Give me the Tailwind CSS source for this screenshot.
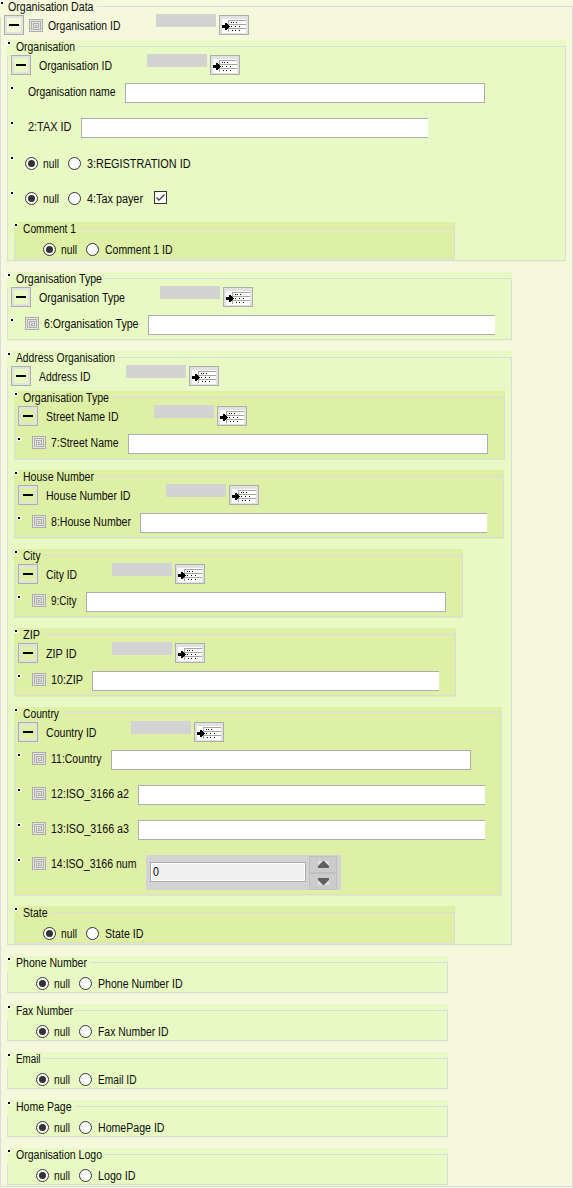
<!DOCTYPE html>
<html lang="en">
<head>
<meta charset="utf-8">
<title>Organisation Data</title>
<script src="https://cdn.jsdelivr.net/npm/@tailwindcss/browser@4"></script>
</head>
<body class="bg-[#f6f8db] font-['Liberation_Sans',Arial,sans-serif] text-[12px] leading-[14px] text-[#111] overflow-hidden">
<svg class="hidden">
  <symbol id="spiral" viewBox="0 0 14 13"><g fill="none" stroke="#adadad" shape-rendering="crispEdges"><rect x=".5" y=".5" width="13" height="12" fill="#e4e4dc"/><path d="M2.5 11V2.5H11.5V10.5H4.5V4.5H9.5V8.5H6.5V6.5H8"/></g></symbol>
  <symbol id="list" viewBox="0 0 24 14"><g shape-rendering="crispEdges"><path fill="#fff" d="M0 0h24v14H0z"/><path fill="#a8a498" d="M6 1h18v1H6zM6 5h18v1H6zM6 9h18v1H6zM6 1h1v12H6z"/><path fill="#000" d="M9 3h1v1H9zM11 3h1v1h-1zM14 3h1v1h-1zM9 7h1v1H9zM13 7h1v1h-1zM17 7h1v1h-1zM10 11h1v1h-1zM13 11h1v1h-1zM17 11h1v1h-1zM0 6h4v3H0zM3 4h2v7H3zM5 5h1v5H5zM6 6h1v3H6zM7 7h1v1H7z"/></g></symbol>
</svg>
<main id="form"></main>
<script>
const text = (t, w, cls = '') => `<svg class="block shrink-0 h-[14px] overflow-visible ${cls}" style="width:${w}px"><text x="0" y="11" textLength="${w}" lengthAdjust="spacingAndGlyphs" class="fill-[#0c0c0c]">${t}</text></svg>`;
const space = w => `<span class="shrink-0" style="width:${w}px"></span>`;
const bullet = '<i class="block shrink-0 size-1 bg-black border border-white"></i>';
const spiral = '<svg class="block shrink-0 w-[14px] h-[13px] mt-[5px]"><use href="#spiral"/></svg>';
const radio = on => `<span class="grid place-items-center shrink-0 size-[13px] rounded-full border border-[#333] bg-white">${on ? '<span class="size-[7px] rounded-full bg-[#333]"></span>' : ''}</span>`;

// header: [label, label start, label width, grey box start]; starts are relative to the group
const header = ([label, x, w, gx], icon) => `
  <div class="flex h-[26px] -mt-[3px] items-start">
    ${space(3)}<button class="shrink-0 size-5 mt-px border border-[#adadad]"><span class="grid place-items-center size-[18px] border-2 border-[#e1e1e1]"><span class="w-[10px] h-[2px] bg-black"></span></span></button>
    ${icon ? space(5) + spiral + space(x - 43) : space(x - 24)}${text(label, w, 'mt-[5px]')}${space(gx - x - w)}
    <span class="shrink-0 w-[60px] h-[13px] bg-[#d3d3d3]"></span>
    <button class="shrink-0 ml-[3px] mt-px w-[30px] h-5 pl-[2px] pt-[2px] border border-[#adadad] bg-[#e1e1e1]"><svg class="block w-6 h-[14px]"><use href="#list"/></svg></button>
  </div>`;

const input = (w, open) => `<input class="block shrink-0 mt-[3px] h-5 bg-white border-y border-l border-[#abadb3] ${open ? '' : 'border-r'}" style="width:${w}px">`;
// field: label start, label, label width, input start, input width
const field = (x, label, w, ix, iw, icon, open) => `
  <div class="flex h-[35px] items-start">${space(2)}<span class="pt-[6px]">${bullet}</span>
    ${icon ? space(11) + spiral + space(x - 32) : space(x - 7)}${text(label, w, 'mt-[5px]')}${space(ix - x - w)}${input(iw, open)}</div>`;
const choice = (label, w, check) => `
  <div class="flex h-[35px] items-start">${space(2)}<span class="pt-[6px]">${bullet}</span>${space(11)}
    <div class="flex items-center h-[13px] mt-[7px]">${radio(1)}${space(5)}${text('null', 16)}${space(9)}${radio(0)}${space(6)}${text(label, w)}</div>
    ${check ? space(11) + '<svg class="block w-[13px] h-[13px] mt-[6px]" viewBox="0 0 13 13"><rect x=".5" y=".5" width="12" height="12" fill="#fff" stroke="#333"/><path d="M2.5 6.5 5 9.2 10.5 3.5" fill="none" stroke="#333" stroke-width="1.2"/></svg>' : ''}</div>`;
const spinner = `
  <div class="flex h-[35px] items-start">${space(2)}<span class="pt-[6px]">${bullet}</span>${space(11)}${spiral}${space(5)}${text('14:ISO_3166 num', 85.5, 'mt-[5px]')}${space(9.5)}
    <div class="flex mt-[3px] w-[195px] h-[35px] bg-[#d3d3d3]">
      <div class="mt-[7px] ml-1 w-[156px] h-5 border border-[#a6a8b0] bg-white p-px"><div class="h-full bg-[#f0f0f0] pl-px pt-px">${text('0', 6)}</div></div>
      <div class="ml-[3px] mt-px w-7 h-[34px]">
        <div class="grid place-items-center h-[17px] border border-[#bfbfbf] bg-[#ccc]"><svg class="w-[11px] h-[7px]"><path fill="#e2e2e2" d="M0 0h11v7H0z"/><path fill="#606060" d="M5 0h1l5 5v2H0V5z"/></svg></div>
        <div class="grid place-items-center h-[17px] border border-[#bfbfbf] bg-[#ccc]"><svg class="w-[11px] h-[7px]"><path fill="#e2e2e2" d="M0 0h11v7H0z"/><path fill="#606060" d="M0 0h11v2L6 7H5L0 2z"/></svg></div>
      </div>
    </div></div>`;

const tones = ['bg-[#f6f8db]', 'bg-[#e8f9c3]', 'bg-[#def0a5]'];
// group: tone, width, height, legend, legend start, legend width
const group = (tone, w, h, legend, lx, lw, body, gap = 10) => `
  <section class="flex flex-col ${tones[tone]}" style="width:${w}px;height:${h}px;margin-bottom:${gap}px">
    <div class="flex h-[17px] shrink-0"><span class="pt-px">${bullet}</span>${space(lx - 4)}${text(legend, lw)}
      <span class="ml-[3px] mt-[6px] grow border-t border-r border-[#dbdbdf]"></span></div>
    <div class="grow border-x border-b border-[#dbdbdf] mb-px min-h-0">${body}</div>
  </section>`;
const nullGroup = (tone, w, legend, lx, lw, label, tw, gap = 10) => group(tone, w, 38, legend, lx, lw, `
  <div class="flex items-center h-[13px] mt-1">${space(28)}${radio(1)}${space(5)}${text('null', 16)}${space(9)}${radio(0)}${space(6)}${text(label, tw)}</div>`, gap);
const nest = s => `<div class="pl-[6px]">${s}</div>`;

document.getElementById('form').innerHTML = group(0, 573, 1188, 'Organisation Data', 8, 85.5,
  header(['Organisation ID', 48, 72.5, 156], true) + nest(
    group(1, 559, 222, 'Organisation', 8.5, 59,
      header(['Organisation ID', 31.5, 73, 140]) +
      field(20.5, 'Organisation name', 87.5, 118, 360) +
      field(21, '2:TAX ID', 43.5, 74, 347, false, true) +
      choice('3:REGISTRATION ID', 103.5) + choice('4:Tax payer', 56, true) +
      `<div class="mt-[2px]">${nest(nullGroup(2, 441, 'Comment 1', 8.5, 53, 'Comment 1 ID', 67.5, 0))}</div>`) +
    group(1, 505, 69, 'Organisation Type', 8.5, 86,
      header(['Organisation Type', 31.5, 86, 153]) +
      field(37, '6:Organisation Type', 94.5, 141, 347, true, true)) +
    group(1, 505, 595, 'Address Organisation', 9, 99,
      header(['Address ID', 32, 51.5, 119]) + nest(
        group(2, 491, 69, 'Organisation Type', 8.5, 86, header(['Street Name ID', 32, 72.5, 140]) + field(37, '7:Street Name', 67.5, 114, 360, true)) +
        group(2, 490, 69, 'House Number', 9, 71, header(['House Number ID', 32, 84.5, 152]) + field(37, '8:House Number', 80, 126, 347, true, true)) +
        group(2, 449, 69, 'City', 8.5, 17.5, header(['City ID', 31.5, 31, 98]) + field(37, '9:City', 25.5, 72, 360, true)) +
        group(2, 442, 69, 'ZIP', 8.5, 17, header(['ZIP ID', 32, 30.5, 98]) + field(37, '10:ZIP', 32, 78, 347, true, true)) +
        group(2, 488, 189, 'Country', 8.5, 36, header(['Country ID', 31.5, 50.5, 117]) +
          field(37, '11:Country', 50.5, 97, 360, true) +
          field(37, '12:ISO_3166 a2', 78, 124, 347, true, true) +
          field(37, '13:ISO_3166 a3', 78, 124, 347, true, true) + spinner) +
        nullGroup(2, 441, 'State', 9, 24.5, 'State ID', 38.5, 0))) +
    nullGroup(1, 441, 'Phone Number', 9, 71, 'Phone Number ID', 84.5) +
    nullGroup(1, 441, 'Fax Number', 9, 57, 'Fax Number ID', 70.5) +
    nullGroup(1, 441, 'Email', 9, 24.5, 'Email ID', 38.5) +
    nullGroup(1, 441, 'Home Page', 9, 55.5, 'HomePage ID', 66.5) +
    nullGroup(1, 441, 'Organisation Logo', 8.5, 86, 'Logo ID', 37.5, 0)), 0);
</script>
</body>
</html>
